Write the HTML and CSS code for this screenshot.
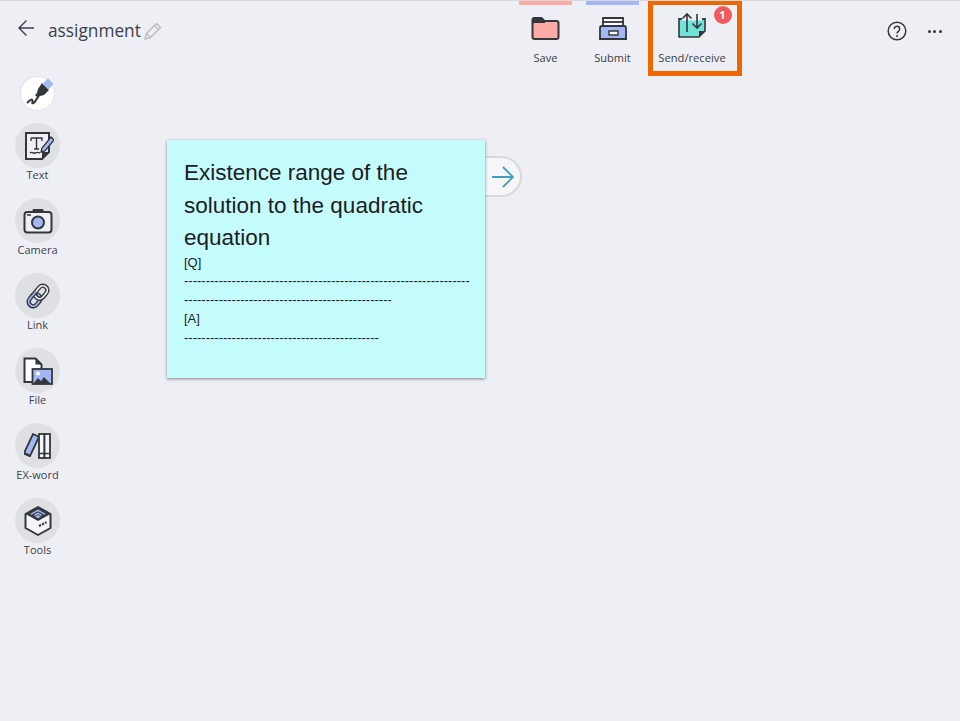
FILE: index.html
```html
<!DOCTYPE html>
<html lang="en">
<head>
    <meta charset="UTF-8">
    <title>assignment</title>
    <link rel="stylesheet" href="styles.css">
</head>
<body>
    <header class="topbar">
        <div class="title-area">
            <svg class="back" width="16" height="16" viewBox="0 0 16 16"><path d="M16 8H1M8.500.500 1 8l7.500 7.500" fill="none" stroke="#3c4048" stroke-width="1.400"/></svg>
            <span class="title">assignment</span>
            <svg class="edit" width="18" height="18" viewBox="0 0 18 18"><path d="M1 17l1.500-5.500L12.500 1.500l4 4-10 10zM2.500 11.500l4 4M10.500 3.500l4 4" fill="none" stroke="#bcbfc5" stroke-width="1.500"/></svg>
        </div>
        <nav class="actions">
            <div class="action save">
                <svg width="30" height="24" viewBox="0.5 0 30 24"><path d="M2 3a2 2 0 0 1 2-2h7l3 3h12a2 2 0 0 1 2 2v14a2 2 0 0 1-2 2H4a2 2 0 0 1-2-2z" fill="#ffaaa4" stroke="#33363d" stroke-width="2"/><path d="M2 7V3a2 2 0 0 1 2-2h7l4 5H4z" fill="#33363d"/></svg>
                <span>Save</span>
            </div>
            <div class="action submit">
                <svg width="30" height="24" viewBox="0 0 30 24"><path d="M5 1h20v8H5z" fill="#fff" stroke="#33363d" stroke-width="1.800"/><path d="M4 5h22" stroke="#33363d" stroke-width="1.800"/><path d="M2 11a2 2 0 0 1 2-2h22a2 2 0 0 1 2 2v11H2z" fill="#a3b8f2" stroke="#33363d" stroke-width="1.800"/><path d="M11 14h9v4h-9z" fill="#fff" stroke="#33363d" stroke-width="1.400"/><path d="M1 21h28v2H1z" fill="#33363d"/></svg>
                <span>Submit</span>
            </div>
            <div class="action send">
                <svg width="28" height="28" viewBox="0 0 28 28"><path d="M1 8h26v12l-6 6H1z" fill="#72e2d8" stroke="#33363d" stroke-width="1.600"/><path d="M21 26v-6h6z" fill="#33363d"/><path d="M14 6.500h-10v3h20v-3h-5z" fill="#eeeff4"/><path d="M1 8.500V8h3M24 8h3v1" fill="none" stroke="#33363d" stroke-width="1.600"/><path d="M9 21V3M4.500 7.500 9 3l4.500 4.500M19 3v14M14.500 12.500 19 17l4.500-4.500" fill="none" stroke="#33363d" stroke-width="1.600"/></svg>
                <span>Send/receive</span>
                <b class="badge">1</b>
            </div>
        </nav>
        <div class="help-area">
            <svg width="20" height="20" viewBox="0 0 20 20"><circle cx="10" cy="10" r="8.800" fill="none" stroke="#33363d" stroke-width="1.500"/><path d="M7.300 8a2.700 2.700 0 1 1 4.300 2.100c-1 .7-1.600 1.200-1.600 2.400" fill="none" stroke="#33363d" stroke-width="1.500"/><circle cx="10" cy="15" r="1" fill="#33363d"/></svg>
            <span class="dots"><i></i><i></i><i></i></span>
        </div>
    </header>

    <main class="workspace">
        <aside class="tools">
            <div class="pen">
                <svg width="32" height="32" viewBox="0 0 32 32"><path d="M5 25c3-3 5-4.500 5.500-2.500s-1.500 3.500 1 2.500 2.500-5 5-6" fill="none" stroke="#33363d" stroke-width="2"/><path d="M20 5l7 7-5 5-4 1-2 2-3-3 2-2 1-4z" fill="#33363d"/><path d="M26 .500l5.500 5.500-5 5.500L20.500 6z" fill="#a3b8f2"/></svg>
            </div>
            <div class="tool">
                <span class="tool-icon"><svg width="32" height="32" viewBox="-1 0 32 32"><path d="M3 3h23v19l-7 7H3z" fill="#eef0f4" stroke="#33363d" stroke-width="2"/><path d="M19 29v-7h7z" fill="#33363d"/><path d="M8 8h11v3M8 8v3M13.500 8v11M11 19h5M7 23c2-2 3 1 5 0s3-1 5 0" fill="none" stroke="#33363d" stroke-width="1.400"/><path d="M19 18l-1 4 4-1 9-11-3-3z" fill="#a3b8f2" stroke="#33363d" stroke-width="1.300"/></svg></span>
                <span class="tool-label">Text</span>
            </div>
            <div class="tool">
                <span class="tool-icon"><svg width="30" height="26" viewBox="0 0 30 26"><path d="M9 4l1-3h10l1 3z" fill="#33363d"/><rect x="1.500" y="4" width="27" height="20.500" rx="3" fill="#eef0f4" stroke="#33363d" stroke-width="2"/><path d="M4 7h4" stroke="#33363d" stroke-width="1.500"/><circle cx="15" cy="14.500" r="6" fill="#a3b8f2" stroke="#33363d" stroke-width="2"/></svg></span>
                <span class="tool-label">Camera</span>
            </div>
            <div class="tool">
                <span class="tool-icon"><svg width="28" height="30" viewBox="0 0 28 30"><g transform="rotate(40 14 15)" fill="none"><rect x="9.500" y="14" width="9" height="13" rx="4.500" stroke="#33363d" stroke-width="4.400"/><rect x="9.500" y="14" width="9" height="13" rx="4.500" stroke="#a3b8f2" stroke-width="1.700"/><rect x="9.500" y="3" width="9" height="14" rx="4.500" stroke="#33363d" stroke-width="4.400"/><rect x="9.500" y="3" width="9" height="14" rx="4.500" stroke="#f4f5f8" stroke-width="1.700"/><path d="M9.500 13v6" stroke="#33363d" stroke-width="4.400"/><path d="M9.500 13v6" stroke="#a3b8f2" stroke-width="1.700"/></g></svg></span>
                <span class="tool-label">Link</span>
            </div>
            <div class="tool">
                <span class="tool-icon"><svg width="30" height="32" viewBox="0 0 30 32"><path d="M1.500 3.500h11l6 6V27h-17z" fill="#fff" stroke="#33363d" stroke-width="2"/><path d="M12.500 3.500v6h6z" fill="#33363d"/><rect x="9.500" y="14" width="19.500" height="15" fill="#a3b8f2" stroke="#33363d" stroke-width="1.800"/><path d="M10 29l5-6 3 3 3-4 7 7z" fill="#33363d"/><circle cx="15" cy="18.500" r="2" fill="#fff"/></svg></span>
                <span class="tool-label">File</span>
            </div>
            <div class="tool">
                <span class="tool-icon"><svg width="28" height="26" viewBox="0 0 28 26"><path d="M9 1l6 3-9 19-6-3z" fill="#a3b8f2" stroke="#33363d" stroke-width="1.800"/><path d="M0 20l6 3" stroke="#33363d" stroke-width="2.500"/><rect x="15" y="1" width="5.500" height="24" fill="#f4f5f8" stroke="#33363d" stroke-width="1.800"/><rect x="20.500" y="1" width="5.500" height="24" fill="#f4f5f8" stroke="#33363d" stroke-width="1.800"/><path d="M15 20.500h11" stroke="#33363d" stroke-width="1.500"/></svg></span>
                <span class="tool-label">EX-word</span>
            </div>
            <div class="tool">
                <span class="tool-icon"><svg width="28" height="32" viewBox="0 0 28 32"><path d="M14 2l12.500 7v14L14 30 1.500 23V9z" fill="#f4f5f8" stroke="#33363d" stroke-width="2" stroke-linejoin="round"/><path d="M14 2l12.500 7L14 16 1.500 9z" fill="#33363d"/><path d="M14 4.500L22 9l-1.500.8L14 6.200 7.500 9.800 6 9z" fill="#a3b8f2"/><path d="M14 7.500L18.500 10l-1.500.8-3-1.600-3 1.600L9.500 10z" fill="#a3b8f2"/><path d="M11 11.500l3-1.500 3 1.500-3 1.700z" fill="#a3b8f2"/><path d="M15 21l2-1M18 19.500l2-1M21 18l1.500-.8" stroke="#33363d" stroke-width="2"/></svg></span>
                <span class="tool-label">Tools</span>
            </div>
        </aside>

        <section class="canvas">
            <article class="card">
                <h2>Existence range of the solution to the quadratic equation</h2>
                <p>[Q]</p>
                <p class="rule">------------------------------------------------------------------------------------------------------------------</p>
                <p>[A]</p>
                <p class="rule">---------------------------------------------</p>
            </article>
            <div class="next">
                <svg width="22" height="22" viewBox="0 0 22 22"><path d="M0 11h21M11 1l10 10-10 10" fill="none" stroke="#3f9fbd" stroke-width="1.800"/></svg>
            </div>
        </section>
    </main>
</body>
</html>
```

FILE: styles.css
```css
* {
    box-sizing: border-box;
}

html, body {
    height: 100%;
}

body {
    margin: 0;
    background: #eeeff4;
    border-top: 1px solid #d9d9d9;
    font-family: "Open Sans", "Noto Sans", sans-serif;
    color: #3c4048;
    overflow: hidden;
}

.topbar {
    display: flex;
    align-items: flex-start;
    height: 75px;
}

.title-area {
    display: flex;
    align-items: center;
    width: 519px;
    padding: 18px 0 0 18px;
}

.back {
    align-self: flex-start;
    margin-top: 1px;
}

.title {
    margin-left: 14px;
    font-size: 17.300px;
    line-height: 24px;
}

.edit {
    margin-left: 3.500px;
}

.actions {
    display: flex;
    gap: 14px;
}

.action {
    position: relative;
    display: flex;
    flex-direction: column;
    align-items: center;
    width: 53px;
    height: 75px;
    padding-top: 9px;
    font-size: 11px;
}

.action svg {
    height: 30px;
}

.action span {
    margin-top: 6px;
    line-height: 15px;
    white-space: nowrap;
}

.save {
    border-top: 4px solid #ffaaa4;
}

.submit {
    border-top: 4px solid #a3b8f2;
}

.send {
    width: 94px;
    margin: -1px 0 0 -5px;
    height: 76px;
    padding: 5px 6px 0 0;
    border: 5px solid #ee6600;
    font-size: 11.200px;
}

.send span {
    margin-top: 10px;
}

.badge {
    position: absolute;
    top: 1px;
    right: 5.500px;
    width: 18px;
    height: 18px;
    border-radius: 50%;
    background: #f25b5b;
    color: #fff;
    font-size: 11px;
    line-height: 18px;
    text-align: center;
}

.help-area {
    display: flex;
    align-items: center;
    gap: 20.500px;
    margin-left: auto;
    padding: 20px 18.500px 0 0;
}

.dots {
    display: flex;
    gap: 2.500px;
}

.dots i {
    width: 3px;
    height: 3px;
    border-radius: 50%;
    background: #33363d;
}

.workspace {
    display: flex;
}

.tools {
    display: flex;
    flex-direction: column;
    align-items: center;
    width: 75px;
    padding-top: 1px;
}

.pen {
    display: flex;
    align-items: center;
    justify-content: center;
    width: 33px;
    height: 33px;
    margin-bottom: 13px;
    border-radius: 50%;
    background: #fff;
    box-shadow: 0 0 0 1px #e4e4e8;
}

.tool {
    display: flex;
    flex-direction: column;
    align-items: center;
    height: 75px;
}

.tool-icon {
    display: flex;
    align-items: center;
    justify-content: center;
    width: 45px;
    height: 45px;
    border-radius: 50%;
    background: #dfe0e4;
}

.tool-label {
    margin-top: -1px;
    font-size: 11px;
    line-height: 15px;
}

.canvas {
    position: relative;
    flex: 1;
    padding: 64px 0 0 92px;
}

.card {
    position: relative;
    z-index: 1;
    width: 318px;
    height: 238px;
    padding: 17px 14px 0 17px;
    background: #c5fdff;
    box-shadow: 0 1px 3px rgba(0, 0, 0, 0.45);
    font-family: "Liberation Sans", Arial, sans-serif;
    color: #1c1c22;
}

.card h2 {
    margin: 0 0 -1px;
    font-size: 22.500px;
    font-weight: 400;
    line-height: 32.500px;
}

.card p {
    margin: 0;
    font-size: 13px;
    line-height: 18.800px;
}

.rule {
    word-break: break-all;
}

.next {
    position: absolute;
    top: 80px;
    left: 395px;
    display: flex;
    align-items: center;
    justify-content: flex-end;
    width: 52px;
    height: 41px;
    padding-right: 6px;
    border: 2px solid #d8d9dc;
    border-radius: 0 21px 21px 0;
    background: #f6f6f9;
}
```
